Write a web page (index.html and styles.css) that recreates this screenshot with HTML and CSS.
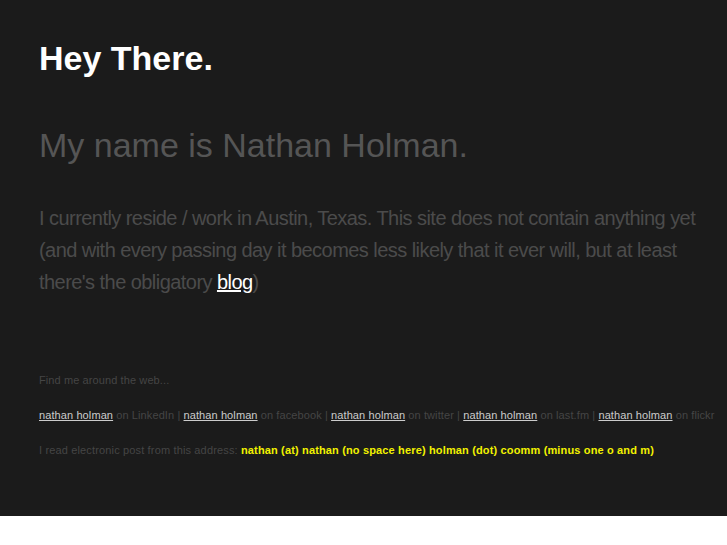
FILE: index.html
```html
<!DOCTYPE html>
<html lang="en">
<head>
    <meta charset="UTF-8">
    <title>Hey There.</title>
    <link rel="stylesheet" href="styles.css">
</head>
<body>
    <div class="page">
        <h1>Hey There.</h1>
        <h2>My name is Nathan Holman.</h2>
        <p class="intro">I currently reside / work in Austin, Texas. This site does not contain anything yet (and with every passing day it becomes less likely that it ever will, but at least there's the obligatory <a href="#">blog</a>)</p>

        <p class="small find">Find me around the web...</p>
        <p class="small links">
            <a href="#">nathan holman</a> on LinkedIn |
            <a href="#">nathan holman</a> on facebook |
            <a href="#">nathan holman</a> on twitter |
            <a href="#">nathan holman</a> on last.fm |
            <a href="#">nathan holman</a> on flickr
        </p>
        <p class="small email">I read electronic post from this address: <strong>nathan (at) nathan (no space here) holman (dot) coomm (minus one o and m)</strong></p>
    </div>
</body>
</html>
```

FILE: styles.css
```css
body {
    margin: 0;
    background-color: #fff;
    font-family: 'Liberation Sans', Arial, sans-serif;
}

.page {
    background-color: #1b1b1b;
    padding: 38px 8px 59px 39px;
}

h1 {
    margin: 0;
    font-size: 34px;
    line-height: 40px;
    font-weight: bold;
    color: #fff;
}

h2 {
    margin: 47px 0 0;
    font-size: 34px;
    line-height: 40px;
    font-weight: normal;
    color: #555;
}

.intro {
    max-width: 664px;
    margin: 37px 0 0;
    font-size: 20px;
    line-height: 32px;
    letter-spacing: -0.55px;
    color: #4b4b4b;
}

.intro a {
    color: #fff;
}

.small {
    margin: 21px 0 0;
    font-size: 11px;
    line-height: 14px;
    letter-spacing: 0.1px;
    color: #454545;
}

.find {
    margin-top: 75px;
}

.small a {
    color: #ccc;
}

.email {
    letter-spacing: 0.15px;
}

.email strong {
    color: #f2f200;
}
```
